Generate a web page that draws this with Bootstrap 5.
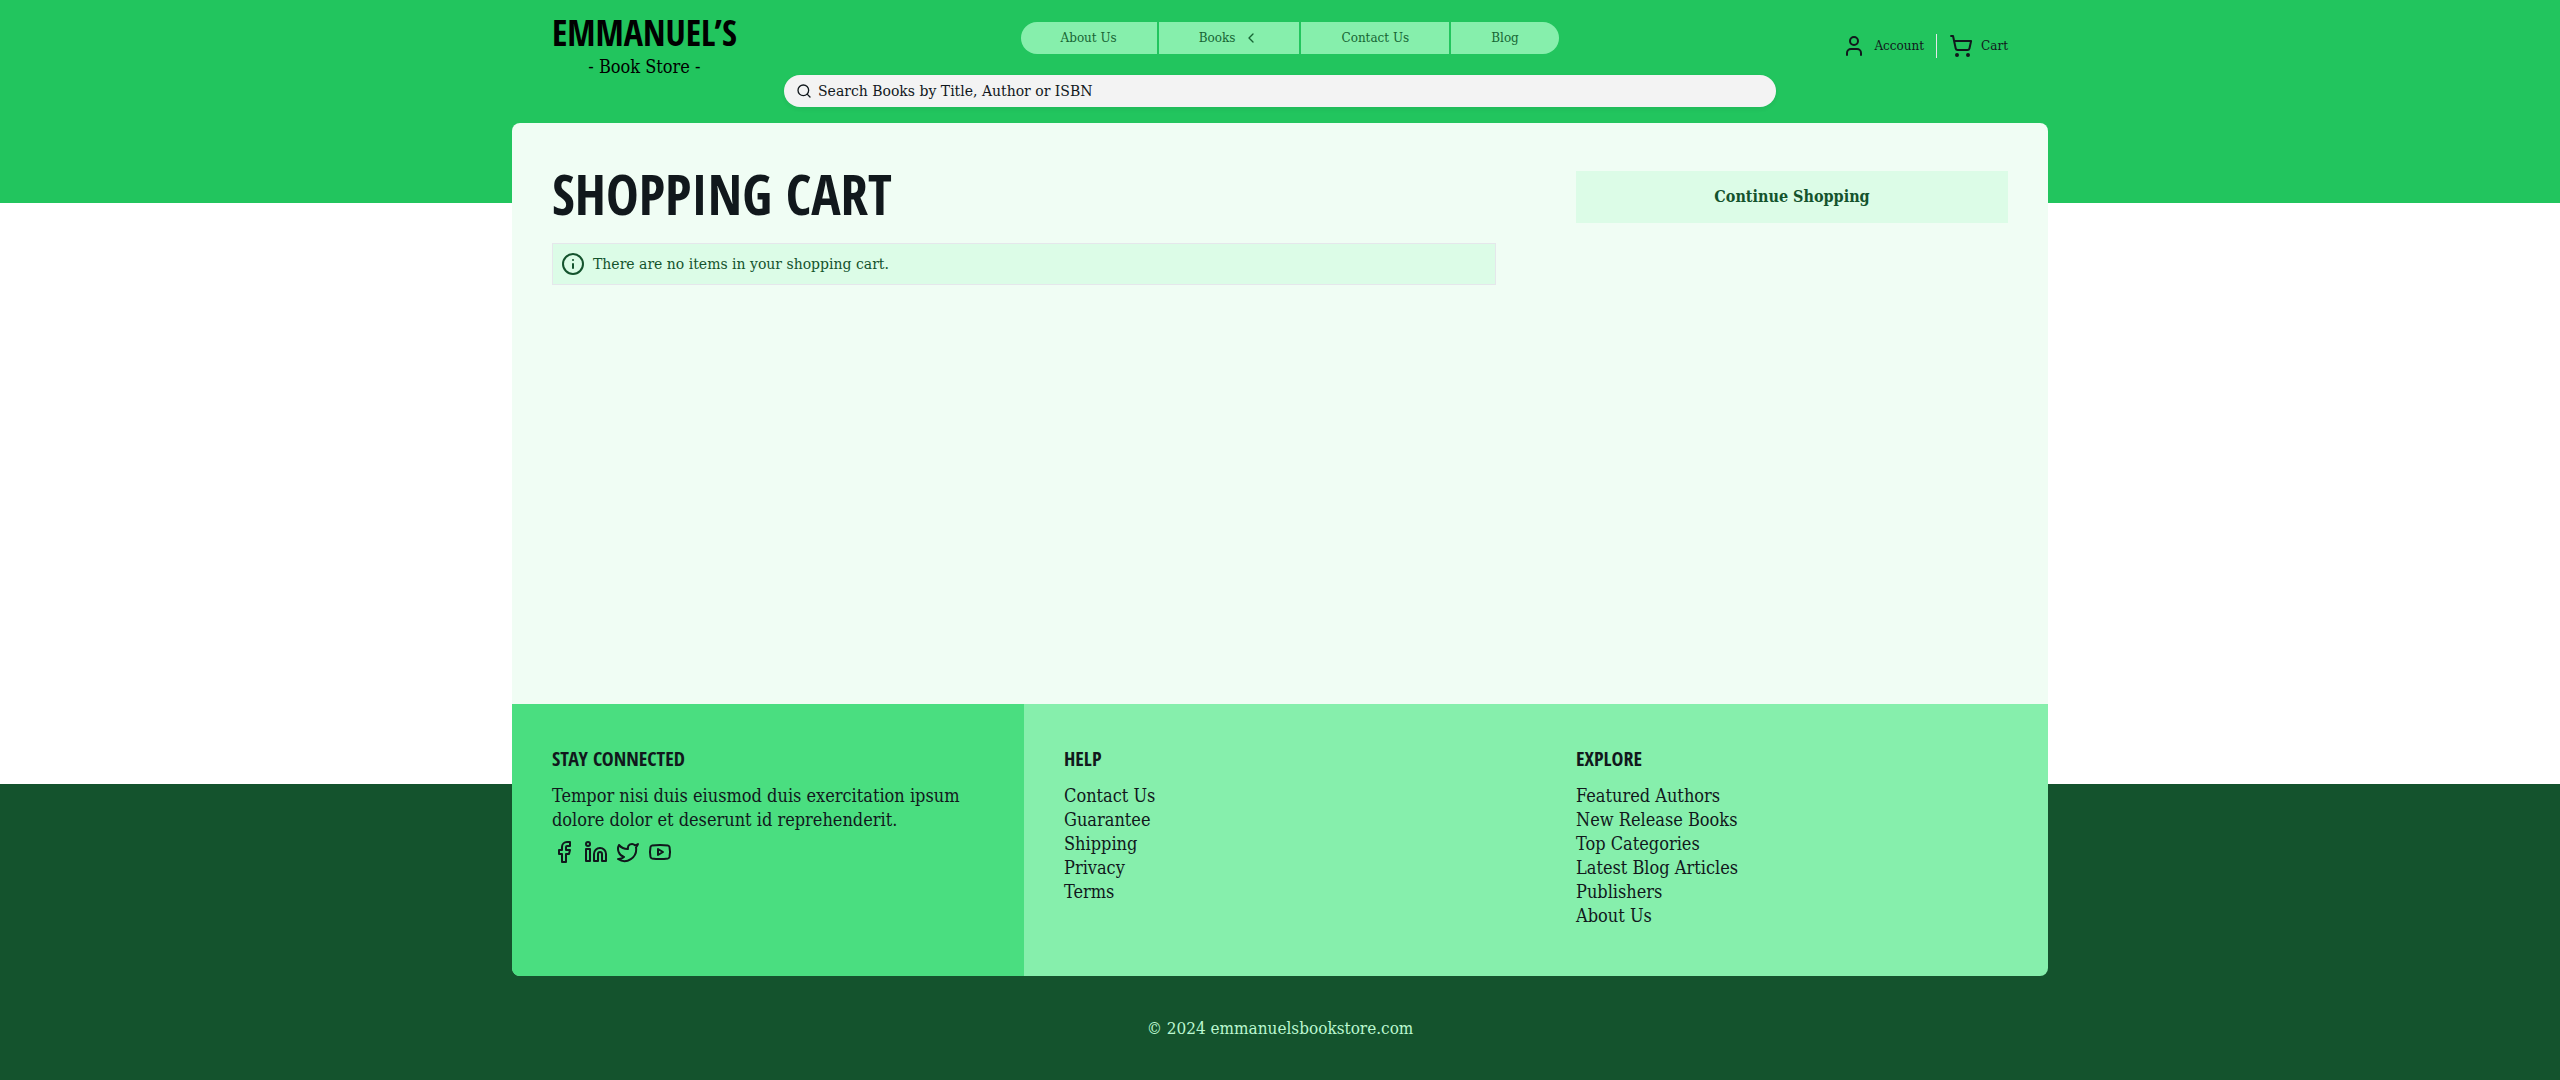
<!DOCTYPE html>
<html lang="en">
<head>
<meta charset="utf-8">
<meta name="viewport" content="width=device-width, initial-scale=1">
<title>Shopping Cart - Emmanuel's Book Store</title>
<link href="https://cdn.jsdelivr.net/npm/bootstrap@5.3.0/dist/css/bootstrap.min.css" rel="stylesheet">
<style>
  :root {
    --ink: #11181c;
    --green-50: #f0fdf4;
    --green-100: #dcfce7;
    --green-200: #bbf7d0;
    --green-300: #86efac;
    --green-400: #4ade80;
    --green-500: #22c55e;
    --green-800: #166534;
    --green-900: #14532d;
    --serif-narrow: "DejaVu Serif Condensed", "DejaVu Serif", serif;
    --serif-wide: "DejaVu Serif", serif;
    --display: "Open Sans Condensed", "Open Sans", sans-serif;
  }
  body { font: 18px/24px var(--serif-narrow); color: var(--ink); background: #fff; }
  a { color: inherit; text-decoration: none; }
  a:hover { text-decoration: underline; }
  svg { display: block; flex: none; fill: none; stroke: currentColor; stroke-width: 2; stroke-linecap: round; stroke-linejoin: round; }
  .shell { width: 100%; max-width: 1536px; margin-inline: auto; }
  .gutter { padding-inline: 40px; }

  .site-header { background: var(--green-500); padding: 16px 0 96px; }
  .brand { color: #000; text-align: center; }
  .brand-name { font: 700 36px/34px var(--display); }
  .brand-tag { font-size: 18px; line-height: 16px; margin-top: 9px; }
  .site-nav { gap: 2px; margin-top: 6px; border-radius: 16px; overflow: hidden; }
  .nav-pill { display: flex; align-items: center; gap: 8px; height: 32px; padding: 0 40px; border: 0; background: var(--green-300); color: var(--green-800); font: 12px/24px var(--serif-wide); }
  .account-link { gap: 8px; font: 12px/24px var(--serif-wide); }
  .divider { width: 1px; height: 24px; margin: 0 12px; background: #e5e7eb; }
  .search-box { max-width: 992px; height: 32px; padding: 0 12px; gap: 6px; border-radius: 16px; background: #f3f3f3; }
  .search-box input { border: 0; outline: 0; background: transparent; color: var(--ink); font: 14px/24px var(--serif-wide); padding: 0; }
  .search-box input::placeholder { color: var(--ink); opacity: 1; }

  .cart-panel { margin-top: -80px; margin-bottom: 80px; background: var(--green-50); border-radius: 8px 8px 0 0; padding-top: 40px; }
  .page-title { font: 700 55px/62px var(--display); margin-bottom: 18px; }
  .notice { gap: 8px; padding: 8px; border: 1px solid #e5e7eb; background: var(--green-100); color: var(--green-900); font: 14px/24px var(--serif-wide); }
  .btn-continue { --bs-btn-color: var(--green-900); --bs-btn-bg: var(--green-100); --bs-btn-hover-bg: var(--green-200); --bs-btn-hover-color: var(--green-900); --bs-btn-font-family: var(--serif-narrow); --bs-btn-font-weight: 700; --bs-btn-border-width: 0; --bs-btn-border-radius: 0; --bs-btn-padding-y: 14px; --bs-btn-line-height: 24px; margin-top: 8px; }

  .site-footer { background: var(--green-900); }
  .footer-panel { margin-top: -80px; background: var(--green-300); border-radius: 0 0 8px 8px; overflow: hidden; }
  .footer-col { padding: 40px 40px 48px; }
  .footer-col.connected { background: var(--green-400); }
  .footer-title { font: 700 20px/30px var(--display); margin-bottom: 10px; }
  .social { gap: 8px; margin-top: 8px; }
  .copyright { color: var(--green-200); font-size: 17px; padding: 40px 0; }
</style>
</head>
<body class="d-flex flex-column min-vh-100">

<header class="site-header">
  <div class="shell gutter d-flex justify-content-between align-items-start">
    <a class="brand" href="#">
      <div class="brand-name">EMMANUEL’S</div>
      <div class="brand-tag">- Book Store -</div>
    </a>
    <nav class="site-nav d-flex" aria-label="Main">
      <a class="nav-pill" href="#">About Us</a>
      <button class="nav-pill" type="button">Books
        <svg width="16" height="16" viewBox="0 0 24 24" aria-hidden="true"><path d="m15 18-6-6 6-6"/></svg>
      </button>
      <a class="nav-pill" href="#">Contact Us</a>
      <a class="nav-pill" href="#">Blog</a>
    </nav>
    <div class="d-flex align-items-center align-self-center">
      <a class="account-link d-flex align-items-center" href="#">
        <svg width="24" height="24" viewBox="0 0 24 24" aria-hidden="true"><path d="M19 21v-2a4 4 0 0 0-4-4H9a4 4 0 0 0-4 4v2"/><circle cx="12" cy="7" r="4"/></svg>
        Account
      </a>
      <div class="divider"></div>
      <a class="account-link d-flex align-items-center" href="#">
        <svg width="24" height="24" viewBox="0 0 24 24" aria-hidden="true"><circle cx="8" cy="21" r="1"/><circle cx="19" cy="21" r="1"/><path d="M2.05 2.05h2l2.66 12.42a2 2 0 0 0 2 1.58h9.78a2 2 0 0 0 1.95-1.57l1.65-7.43H5.12"/></svg>
        Cart
      </a>
    </div>
  </div>
  <form class="search-box shadow-sm d-flex align-items-center mx-auto" role="search">
    <label for="book-search"><svg width="16" height="16" viewBox="0 0 24 24" aria-hidden="true"><circle cx="11" cy="11" r="8"/><path d="m21 21-4.3-4.3"/></svg></label>
    <input class="flex-grow-1" id="book-search" type="search" aria-label="Search books" placeholder="Search Books by Title, Author or ISBN">
  </form>
</header>

<main class="cart-panel shell flex-grow-1">
  <div class="row g-0">
    <section class="col-12 col-lg-8 gutter">
      <h1 class="page-title">SHOPPING CART</h1>
      <div class="notice d-flex align-items-center" role="status">
        <svg width="24" height="24" viewBox="0 0 24 24" aria-hidden="true"><circle cx="12" cy="12" r="10"/><path d="M12 16v-4M12 8h.01"/></svg>
        There are no items in your shopping cart.
      </div>
    </section>
    <aside class="col-12 col-lg-4 gutter">
      <button class="btn btn-continue w-100" type="button">Continue Shopping</button>
    </aside>
  </div>
</main>

<footer class="site-footer d-flex flex-column">
  <div class="footer-panel shell">
    <div class="row g-0">
      <section class="footer-col connected col-12 col-md-4">
        <h2 class="footer-title">STAY CONNECTED</h2>
        <p class="mb-0">Tempor nisi duis eiusmod duis exercitation ipsum dolore dolor et deserunt id reprehenderit.</p>
        <div class="social d-flex">
          <a href="#" aria-label="Facebook"><svg width="24" height="24" viewBox="0 0 24 24"><path d="M18 2h-3a5 5 0 0 0-5 5v3H7v4h3v8h4v-8h3l1-4h-4V7a1 1 0 0 1 1-1h3z"/></svg></a>
          <a href="#" aria-label="LinkedIn"><svg width="24" height="24" viewBox="0 0 24 24"><path d="M16 8a6 6 0 0 1 6 6v7h-4v-7a2 2 0 0 0-4 0v7h-4v-7a6 6 0 0 1 6-6z"/><path d="M2 9h4v12H2z"/><circle cx="4" cy="4" r="2"/></svg></a>
          <a href="#" aria-label="Twitter"><svg width="24" height="24" viewBox="0 0 24 24"><path d="M22 4s-.7 2.1-2 3.4c1.600 10-9.400 17.300-18 11.600 2.200.1 4.400-.6 6-2C3 15.500.5 9.600 3 5c2.200 2.600 5.600 4.100 9 4-.9-4.200 4-6.600 7-3.800 1.100 0 3-1.200 3-1.200z"/></svg></a>
          <a href="#" aria-label="YouTube"><svg width="24" height="24" viewBox="0 0 24 24"><path d="M2.500 17a24.120 24.120 0 0 1 0-10 2 2 0 0 1 1.400-1.400 49.560 49.560 0 0 1 16.200 0A2 2 0 0 1 21.500 7a24.120 24.120 0 0 1 0 10 2 2 0 0 1-1.400 1.400 49.550 49.550 0 0 1-16.200 0A2 2 0 0 1 2.500 17"/><path d="m10 15 5-3-5-3z"/></svg></a>
        </div>
      </section>
      <section class="footer-col col-12 col-md-4">
        <h2 class="footer-title">HELP</h2>
        <ul class="list-unstyled mb-0">
          <li><a href="#">Contact Us</a></li>
          <li><a href="#">Guarantee</a></li>
          <li><a href="#">Shipping</a></li>
          <li><a href="#">Privacy</a></li>
          <li><a href="#">Terms</a></li>
        </ul>
      </section>
      <section class="footer-col col-12 col-md-4">
        <h2 class="footer-title">EXPLORE</h2>
        <ul class="list-unstyled mb-0">
          <li><a href="#">Featured Authors</a></li>
          <li><a href="#">New Release Books</a></li>
          <li><a href="#">Top Categories</a></li>
          <li><a href="#">Latest Blog Articles</a></li>
          <li><a href="#">Publishers</a></li>
          <li><a href="#">About Us</a></li>
        </ul>
      </section>
    </div>
  </div>
  <p class="copyright text-center mb-0">© 2024 emmanuelsbookstore.com</p>
</footer>

<script src="https://cdn.jsdelivr.net/npm/bootstrap@5.3.0/dist/js/bootstrap.bundle.min.js"></script>
</body>
</html>
